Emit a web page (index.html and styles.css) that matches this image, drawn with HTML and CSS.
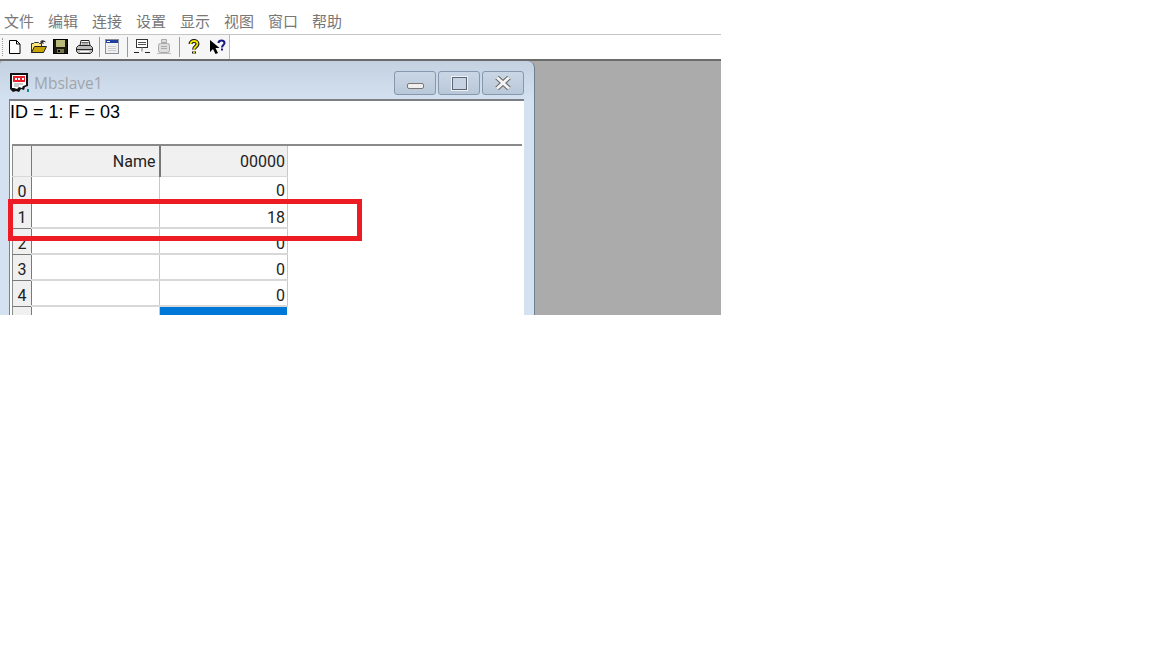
FILE: index.html
```html
<!DOCTYPE html>
<html lang="zh">

<head>
  <meta charset="utf-8" />
  <title>Modbus Slave</title>
  <link rel="stylesheet" href="styles.css">
</head>

<body>
  <div class="app">
    <div class="menubar">
      <span>文件</span><span>编辑</span><span>连接</span><span>设置</span><span>显示</span><span>视图</span><span>窗口</span><span>帮助</span>
    </div>
    <div class="toolbar">
      <div class="tools">
        <i class="grip"></i>
        <svg class="tool t-new" width="14" height="16" viewBox="0 0 14 16"><path d="M1.500 1.500h7l3.500 3.500v9.500h-10.500z" fill="#fff" stroke="#000" /><path d="M8.500 1.500v3.500h3.500" fill="none" stroke="#000" /></svg>
        <svg class="tool t-open" width="18" height="16" viewBox="0 0 18 16"><path d="M1.500 13.500v-9h2l1-1h4l1 1h2v3" fill="#ffe680" stroke="#333" /><path d="M1.500 13.500l3-6h12l-3 6z" fill="#c8a400" stroke="#222" /><path d="M10 3l2-2 3 1 1 2-1-1h-2l1 2-3-1z" fill="#333" /></svg>
        <svg class="tool t-save" width="15" height="16" viewBox="0 0 15 16"><rect x="0.500" y="0.500" width="14" height="14" fill="#1b1b12" stroke="#000" /><rect x="3" y="1" width="9" height="7" fill="#b9b97c" /><rect x="4" y="10" width="7" height="4" fill="#77774a" /><rect x="5" y="11" width="2" height="2" fill="#000" /></svg>
        <svg class="tool t-print" width="17" height="16" viewBox="0 0 17 16"><path d="M5 1.500h8l1 5h-10z" fill="#fff" stroke="#222" /><path d="M5.500 3.500h7M5.500 5h7" stroke="#666" /><path d="M2.500 6.500h12l2 2v4l-2 2h-12l-2-2v-4z" fill="#bbb" stroke="#222" /><path d="M1 10.500h15" stroke="#222" /><path d="M4 12.500h9" stroke="#fff" /></svg>
        <b class="sep s-first"></b>
        <svg class="tool t-win" width="14" height="16" viewBox="0 0 14 16"><rect x="0.500" y="0.500" width="13" height="14" fill="#efeff0" stroke="#8a8f98" /><rect x="1" y="1" width="12" height="3" fill="#1f3f9f" /><path d="M2 2.500h3" stroke="#fff" /><path d="M3 7.500h8M3 9.500h8M3 11.500h8" stroke="#ccc" /></svg>
        <b class="sep s-second"></b>
        <svg class="tool t-net" width="17" height="16" viewBox="0 0 17 16"><rect x="2.500" y="0.500" width="11" height="8" fill="#fff" stroke="#333" /><path d="M4 3.500h8M4 5.500h8" stroke="#555" /><path d="M8 8.500v4" stroke="#777" /><path d="M0 13.500h5M11 13.500h5" stroke="#222" /></svg>
        <svg class="tool t-off" width="16" height="16" viewBox="0 0 16 16"><path d="M5.500 0.500h5v3h-5z" fill="#ddd" stroke="#aaa" /><rect x="2.500" y="4.500" width="11" height="9" rx="2" fill="#ddd" stroke="#aaa" /><path d="M5 7.500h6M5 9.500h6" stroke="#aaa" /><path d="M1 14.500h14" stroke="#bbb" /></svg>
        <b class="sep s-third"></b>
        <svg class="tool t-help" width="12" height="16" viewBox="0 0 12 16"><path d="M2.500 5c0-4 7-4 7 0 0 2.500-3.500 2.500-3.500 5.500M6 12.500v2" fill="none" stroke="#111" stroke-width="4" /><path d="M2.500 5c0-4 7-4 7 0 0 2.500-3.500 2.500-3.500 5.500M6 12.800v1.400" fill="none" stroke="#f2e400" stroke-width="1.800" /></svg>
        <svg class="tool t-what" width="16" height="16" viewBox="0 0 16 16"><path d="M0 1v12l3-3 2.500 5 2.500-1-2.500-5h4z" fill="#000" /><path d="M8.500 4c0-3.500 6-3.500 6 0 0 2-2.500 2-2.500 4.500M12 9.500v2" fill="none" stroke="#1a1a80" stroke-width="2" /></svg>
      </div>
    </div>
    <div class="workspace">
      <div class="window">
        <div class="titlebar">
          <svg class="doc-icon" width="20" height="20" viewBox="0 0 20 20"><path d="M0 0h18v13l-3 1-1 3-3-1-2 3-3-1-3 1-3-3z" fill="#111" /><path d="M2 2h14v10l-3 1-1 2-3-1-2 2-3-1-2 0z" fill="#fff" /><rect x="3" y="3" width="12" height="6" fill="#e8202a" /><path d="M5 5h2v2H5zM8 5h2v2H8zM12 5h2v2h-2z" fill="#fff" /><path d="M4 11h9M4 13h5" stroke="#999" /><rect x="17" y="16" width="2" height="3" fill="#148a8a" /></svg>
          <span class="title">Mbslave1</span>
          <div class="winbtns">
            <div class="winbtn"><i class="min"></i></div>
            <div class="winbtn"><i class="max"></i></div>
            <div class="winbtn"><svg width="18" height="16" viewBox="0 0 18 16"><path d="M3 2.500l12 11M15 2.500l-12 11" fill="none" stroke="#666" stroke-width="5" /><path d="M3 2.500l12 11M15 2.500l-12 11" stroke="#f4f4f4" stroke-width="3" /></svg></div>
          </div>
        </div>
        <div class="client">
          <div class="info">ID = 1: F = 03</div>
          <div class="gridwrap">
            <table class="grid">
              <tr class="head"><th class="rownum"></th><th class="name-h">Name</th><th class="val-h">00000</th></tr>
              <tr><th class="rownum">0</th><td></td><td>0</td></tr>
              <tr><th class="rownum">1</th><td></td><td>18</td></tr>
              <tr><th class="rownum">2</th><td></td><td>0</td></tr>
              <tr><th class="rownum">3</th><td></td><td>0</td></tr>
              <tr><th class="rownum">4</th><td></td><td>0</td></tr>
              <tr><th class="rownum"></th><td></td><td class="selected"></td></tr>
            </table>
          </div>
        </div>
      </div>
    </div>
    <div class="redbox"></div>
  </div>
</body>

</html>
```
FILE: styles.css
```css
html,
body {
  margin: 0;
  padding: 0;
  background-color: #fff;
}

.app {
  position: relative;
  width: 721px;
  height: 315px;
  overflow: hidden;
  font-family: "Roboto", "Noto Sans CJK SC", sans-serif;
}

.menubar {
  display: flex;
  gap: 14px;
  box-sizing: border-box;
  height: 35px;
  padding: 11px 0 0 4px;
  border-bottom: 1px solid #c4c4c4;
  font-family: "Noto Sans CJK SC", sans-serif;
  font-size: 15px;
  line-height: 20px;
  color: #777;
}

.menubar span {
  width: 30px;
}

.toolbar {
  height: 24px;
  background-color: #fff;
}

.tools {
  display: flex;
  align-items: center;
  width: 229px;
  height: 24px;
  background-color: #f6f6f6;
  border-right: 1px solid #bbb;
}

.grip {
  width: 2px;
  height: 18px;
  margin-left: 2px;
  border-left: 1px dotted #999;
}

.tool {
  flex: none;
}

.t-new { margin-left: 3px; }
.t-open { margin-left: 8px; }
.t-save { margin-left: 5px; }
.t-print { margin-left: 8px; }

.sep {
  width: 1px;
  height: 20px;
  background-color: #999;
}

.s-first { margin: 0 5px 0 6px; }
.s-second { margin: 0 6px 0 8px; }
.s-third { margin: 0 8px 0 7px; }

.t-off { margin-left: 5px; }
.t-what { margin-left: 10px; }

.workspace {
  height: 256px;
  background-color: #ababab;
  border-top: 2px solid #6b6b6b;
  box-sizing: border-box;
}

.window {
  box-sizing: border-box;
  width: 535px;
  height: 270px;
  padding: 0 9px;
  background: linear-gradient(#c3d1e0, #d3e1f0 40px);
  border-right: 1px solid #6f7f90;
  border-radius: 4px 7px 0 0;
}

.titlebar {
  display: flex;
  align-items: center;
  height: 38px;
  padding-top: 6px;
  box-sizing: border-box;
}

.doc-icon {
  flex: none;
  margin-left: 1px;
}

.title {
  margin-left: 4px;
  font-family: "Open Sans", sans-serif;
  font-size: 15.500px;
  color: #a0a5ab;
}

.winbtns {
  display: flex;
  gap: 2px;
  margin-left: auto;
  margin-right: 1px;
}

.winbtn {
  display: flex;
  align-items: center;
  justify-content: center;
  box-sizing: border-box;
  width: 42px;
  height: 24px;
  background: linear-gradient(#c9d6e5, #b9c8d9);
  border: 1px solid #8698ad;
  border-radius: 3px;
}

.min {
  width: 17px;
  height: 6px;
  box-sizing: border-box;
  background-color: #f0f0f0;
  border: 1px solid #777;
  border-radius: 2px;
  margin-top: 5px;
}

.max {
  width: 17px;
  height: 15px;
  box-sizing: border-box;
  border: 2px solid #5f6670;
  background-color: #c6d3e2;
  outline: 1px solid #eef1f5;
  outline-offset: -1px;
}

.client {
  box-sizing: border-box;
  width: 515px;
  height: 240px;
  background-color: #fff;
  border-top: 2px solid #7c8085;
  border-left: 1px solid #7c8085;
}

.info {
  height: 42px;
  padding-top: 1px;
  font-family: "Liberation Sans", sans-serif;
  font-size: 18px;
  line-height: 21px;
  color: #000;
}

.gridwrap {
  width: 510px;
  margin-left: 2px;
  border-top: 2px solid #8a8a8a;
}

.grid {
  border-collapse: collapse;
  table-layout: fixed;
  width: 275px;
  font-size: 16px;
  color: #222;
}

.grid td,
.grid th {
  box-sizing: border-box;
  height: 26px;
  padding: 4px 2px 0 0;
  font-weight: normal;
  text-align: right;
  border-right: 1px solid #c8c8c8;
  border-bottom: 2px solid #d8d8d8;
}

.grid .head th {
  height: 30px;
  background-color: #f0f0f0;
  padding-top: 2px;
  border-bottom: 1px solid #d8d8d8;
}

.grid .rownum {
  width: 19px;
  text-align: center;
  padding: 4px 0 0 0;
  background-color: #f0f0f0;
  border-left: 1px solid #8a8a8a;
  border-right: 1px solid #7a7a7a;
  border-bottom: 1px solid #7a7a7a;
}

.grid .name-h {
  width: 128px;
  padding-right: 3px;
  border-right: 2px solid #777;
  border-bottom: 2px solid #777;
}

.grid .val-h {
  width: 128px;
}

.grid .selected {
  background-color: #0078d7;
  border: 1px solid #fff;
  border-top-width: 2px;
}

.redbox {
  position: absolute;
  left: 8px;
  top: 199px;
  box-sizing: border-box;
  width: 354px;
  height: 42px;
  border: 5px solid #ed1c24;
}
```
